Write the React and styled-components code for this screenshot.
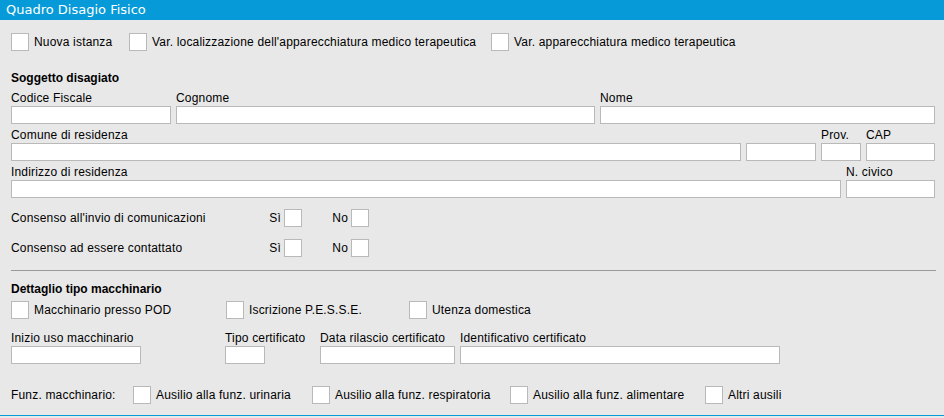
import React from 'react'
import styled, { createGlobalStyle } from 'styled-components'

const GlobalStyle = createGlobalStyle`
  body {
    margin: 0;
    font-family: "Liberation Sans", Arial, sans-serif;
    font-size: 12px;
    letter-spacing: 0.18px;
    color: #000;
    background: #e8e8e8;
  }
`

const Panel = styled.div`
  width: 944px;
  height: 418px;
  background: #e8e8e8;
  display: flex;
  flex-direction: column;
  overflow: hidden;
`

const Header = styled.div`
  height: 20px;
  line-height: 20px;
  padding-left: 6px;
  background: #069ad8;
  color: #fff;
  font-family: "DejaVu Sans", sans-serif;
  font-size: 13px;
  letter-spacing: 0;
`

const Body = styled.div`
  display: flex;
  flex-direction: column;
  padding: 0 9px 0 11px;
`

const OptionRow = styled.div`
  display: flex;
  align-items: center;
  height: 18px;
  margin-top: ${p => p.$mt || 0}px;
`

const Option = styled.div`
  display: flex;
  align-items: center;
  gap: 5px;
  flex: none;
  width: ${p => (p.$w ? `${p.$w}px` : 'auto')};
`

const Box = styled.span`
  display: block;
  flex: none;
  width: 18px;
  height: 18px;
  box-sizing: border-box;
  background: #fff;
  border: 1px solid #b9b9b9;
`

const Text = styled.span`
  white-space: nowrap;
  line-height: 14px;
`

const RowLabel = styled(Text)`
  width: ${p => p.$w}px;
  flex: none;
`

const SectionTitle = styled.div`
  font-weight: bold;
  line-height: 14px;
  letter-spacing: 0;
  margin-top: ${p => p.$mt}px;
`

const FieldRow = styled.div`
  display: flex;
  gap: ${p => (p.$gap === undefined ? 5 : p.$gap)}px;
  margin-top: ${p => p.$mt}px;
`

const Field = styled.div`
  display: flex;
  flex-direction: column;
  flex: none;
  width: ${p => p.$w}px;
`

const FieldLabel = styled.div`
  height: 15px;
  line-height: 14px;
  white-space: nowrap;
`

const Input = styled.div`
  height: 18px;
  box-sizing: border-box;
  width: ${p => (p.$w ? `${p.$w}px` : '100%')};
  background: #fff;
  border: 1px solid #b9b9b9;
`

const ConsentRow = styled.div`
  display: flex;
  align-items: center;
  height: 18px;
  margin-top: ${p => p.$mt}px;
`

const Choice = styled.div`
  display: flex;
  align-items: center;
  justify-content: flex-end;
  gap: 3px;
  flex: none;
  width: ${p => p.$w}px;
`

const Divider = styled.div`
  height: 1px;
  width: 925px;
  background: #9a9a9a;
  margin-top: 13px;
`

const BottomLine = styled.div`
  height: 1px;
  background: #069ad8;
  margin-top: 11px;
`

function Check({ label, w }) {
  return (
    <Option $w={w}>
      <Box />
      <Text>{label}</Text>
    </Option>
  )
}

function TextField({ label, w, inputW }) {
  return (
    <Field $w={w}>
      <FieldLabel>{label}</FieldLabel>
      <Input $w={inputW} />
    </Field>
  )
}

function Consent({ label, mt }) {
  return (
    <ConsentRow $mt={mt}>
      <RowLabel $w={258}>{label}</RowLabel>
      <Choice $w={33}>
        <Text>Sì</Text>
        <Box />
      </Choice>
      <Choice $w={67}>
        <Text>No</Text>
        <Box />
      </Choice>
    </ConsentRow>
  )
}

export default function App() {
  return (
    <>
      <GlobalStyle />
      <Panel>
        <Header>Quadro Disagio Fisico</Header>
        <Body>
          <OptionRow $mt={13}>
            <Check w={118} label="Nuova istanza" />
            <Check w={362} label="Var. localizzazione dell'apparecchiatura medico terapeutica" />
            <Check label="Var. apparecchiatura medico terapeutica" />
          </OptionRow>

          <SectionTitle $mt={20}>Soggetto disagiato</SectionTitle>
          <FieldRow $mt={6}>
            <TextField w={160} label="Codice Fiscale" />
            <TextField w={419} label="Cognome" />
            <TextField w={335} label="Nome" />
          </FieldRow>
          <FieldRow $mt={4}>
            <TextField w={730} label="Comune di residenza" />
            <TextField w={70} label="" />
            <TextField w={40} label="Prov." />
            <TextField w={69} label="CAP" />
          </FieldRow>
          <FieldRow $mt={4}>
            <TextField w={830} label="Indirizzo di residenza" />
            <TextField w={89} label="N. civico" />
          </FieldRow>

          <Consent mt={11} label="Consenso all'invio di comunicazioni" />
          <Consent mt={12} label="Consenso ad essere contattato" />

          <Divider />

          <SectionTitle $mt={11}>Dettaglio tipo macchinario</SectionTitle>
          <OptionRow $mt={5}>
            <Check w={215} label="Macchinario presso POD" />
            <Check w={183} label="Iscrizione P.E.S.S.E." />
            <Check label="Utenza domestica" />
          </OptionRow>
          <FieldRow $mt={12} $gap={0}>
            <TextField w={214} inputW={130} label="Inizio uso macchinario" />
            <TextField w={95} inputW={40} label="Tipo certificato" />
            <TextField w={140} inputW={135} label="Data rilascio certificato" />
            <TextField w={320} label="Identificativo certificato" />
          </FieldRow>
          <OptionRow $mt={22}>
            <RowLabel $w={122}>Funz. macchinario:</RowLabel>
            <Check w={179} label="Ausilio alla funz. urinaria" />
            <Check w={198} label="Ausilio alla funz. respiratoria" />
            <Check w={195} label="Ausilio alla funz. alimentare" />
            <Check label="Altri ausili" />
          </OptionRow>
        </Body>
        <BottomLine />
      </Panel>
    </>
  )
}
